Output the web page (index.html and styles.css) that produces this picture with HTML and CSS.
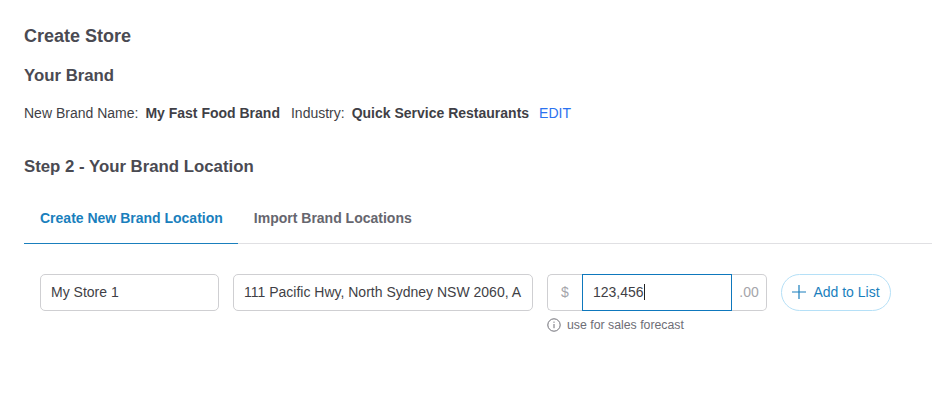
FILE: index.html
```html
<!DOCTYPE html>
<html lang="en">
<head>
    <meta charset="UTF-8">
    <meta name="viewport" content="width=device-width, initial-scale=1.0">
    <title>Create Store</title>
    <link rel="stylesheet" href="styles.css">
</head>
<body>
    <div class="container">
        <h1 class="page-title">Create Store</h1>
        <h2 class="brand-title">Your Brand</h2>
        <p class="brand-info">
            <span>New Brand Name:</span>
            <b>My Fast Food Brand</b>
            <span>Industry:</span>
            <b>Quick Service Restaurants</b>
            <a class="edit-link" href="#">EDIT</a>
        </p>
        <h2 class="step-title">Step 2 - Your Brand Location</h2>

        <div class="tabs">
            <a class="tab active" href="#">Create New Brand Location</a>
            <a class="tab" href="#">Import Brand Locations</a>
        </div>

        <div class="location-form">
            <div class="field name-field">My Store 1</div>
            <div class="field address-field">111 Pacific Hwy, North Sydney NSW 2060, A</div>
            <div class="sales-group">
                <div class="input-group">
                    <div class="addon addon-left">$</div>
                    <div class="sales-input"><span class="caret">123,456</span></div>
                    <div class="addon addon-right">.00</div>
                </div>
                <div class="hint">
                    <svg class="info-icon" width="14" height="14" viewBox="0 0 14 14" fill="none" stroke="#6e6e76">
                        <circle cx="7" cy="7" r="6.2"/>
                        <path d="M7 6v4.2M7 3.6v1.2"/>
                    </svg>
                    <span>use for sales forecast</span>
                </div>
            </div>
            <button class="add-btn">
                <svg width="14" height="14" viewBox="0 0 14 14" fill="none" stroke="#1a7fbd" stroke-width="1.2">
                    <path d="M7 0v14M0 7h14"/>
                </svg>
                Add to List
            </button>
        </div>
    </div>
</body>
</html>
```

FILE: styles.css
```css
body, html {
    margin: 0;
    height: 100%;
    background: #fff;
    font-family: "Liberation Sans", Arial, sans-serif;
    color: #3f3f46;
}

.container {
    padding: 26px 0 0 24px;
}

.page-title {
    margin: 0;
    font-size: 18px;
    line-height: 20px;
    font-weight: bold;
    color: #4a4a52;
}

.brand-title, .step-title {
    margin: 0;
    font-size: 16.8px;
    line-height: 20px;
    font-weight: bold;
    color: #4a4a52;
}

.brand-title {
    margin-top: 20px;
}

.brand-info {
    display: flex;
    margin: 17px 0 0;
    font-size: 14px;
    line-height: 20px;
    color: #3f3f46;
}

.brand-info span {
    margin-right: 7px;
}

.brand-info b {
    margin-right: 11px;
}

.brand-info b:nth-of-type(2) {
    margin-right: 10px;
}

.edit-link {
    color: #2b72f0;
    text-decoration: none;
}

.step-title {
    margin-top: 34px;
}

.tabs {
    display: flex;
    margin-top: 20px;
    border-bottom: 1px solid #e0e0e3;
}

.tab {
    padding: 13px 16px 16px;
    font-size: 14px;
    line-height: 17px;
    font-weight: bold;
    color: #66666e;
    text-decoration: none;
    margin-bottom: -1px;
}

.tab.active {
    padding-right: 15px;
    color: #1a7fbd;
    border-bottom: 1px solid #1a7fbd;
}

.location-form {
    display: flex;
    align-items: flex-start;
    gap: 14px;
    margin-top: 30px;
    padding-left: 16px;
}

.field {
    box-sizing: border-box;
    height: 37px;
    padding: 0 10px;
    border: 1px solid #cfcfd2;
    border-radius: 5px;
    font-size: 14px;
    line-height: 35px;
    white-space: nowrap;
    overflow: hidden;
}

.name-field {
    width: 179px;
}

.address-field {
    width: 300px;
}

.input-group {
    display: flex;
    height: 37px;
    width: 220px;
    box-sizing: border-box;
}

.addon {
    box-sizing: border-box;
    width: 35px;
    border: 1px solid #cfcfd2;
    font-size: 14px;
    line-height: 35px;
    color: #a5a5aa;
    text-align: center;
}

.addon-left {
    border-right: 0;
    border-radius: 5px 0 0 5px;
}

.addon-right {
    border-left: 0;
    border-radius: 0 5px 5px 0;
}

.sales-input {
    box-sizing: border-box;
    width: 150px;
    padding: 0 10px;
    border: 1px solid #0e78bd;
    font-size: 14px;
    line-height: 35px;
}

.caret {
    border-right: 1px solid #222;
}

.hint {
    display: flex;
    align-items: center;
    gap: 6px;
    margin-top: 7px;
    font-size: 12.3px;
    line-height: 14px;
    color: #6e6e76;
}

.add-btn {
    display: flex;
    align-items: center;
    justify-content: center;
    gap: 7px;
    box-sizing: border-box;
    width: 110px;
    height: 37px;
    padding: 0 0 1px;
    background: #fff;
    border: 1px solid #b5e0f7;
    border-radius: 19px;
    font-family: inherit;
    font-size: 14px;
    color: #1a7fbd;
}
```
